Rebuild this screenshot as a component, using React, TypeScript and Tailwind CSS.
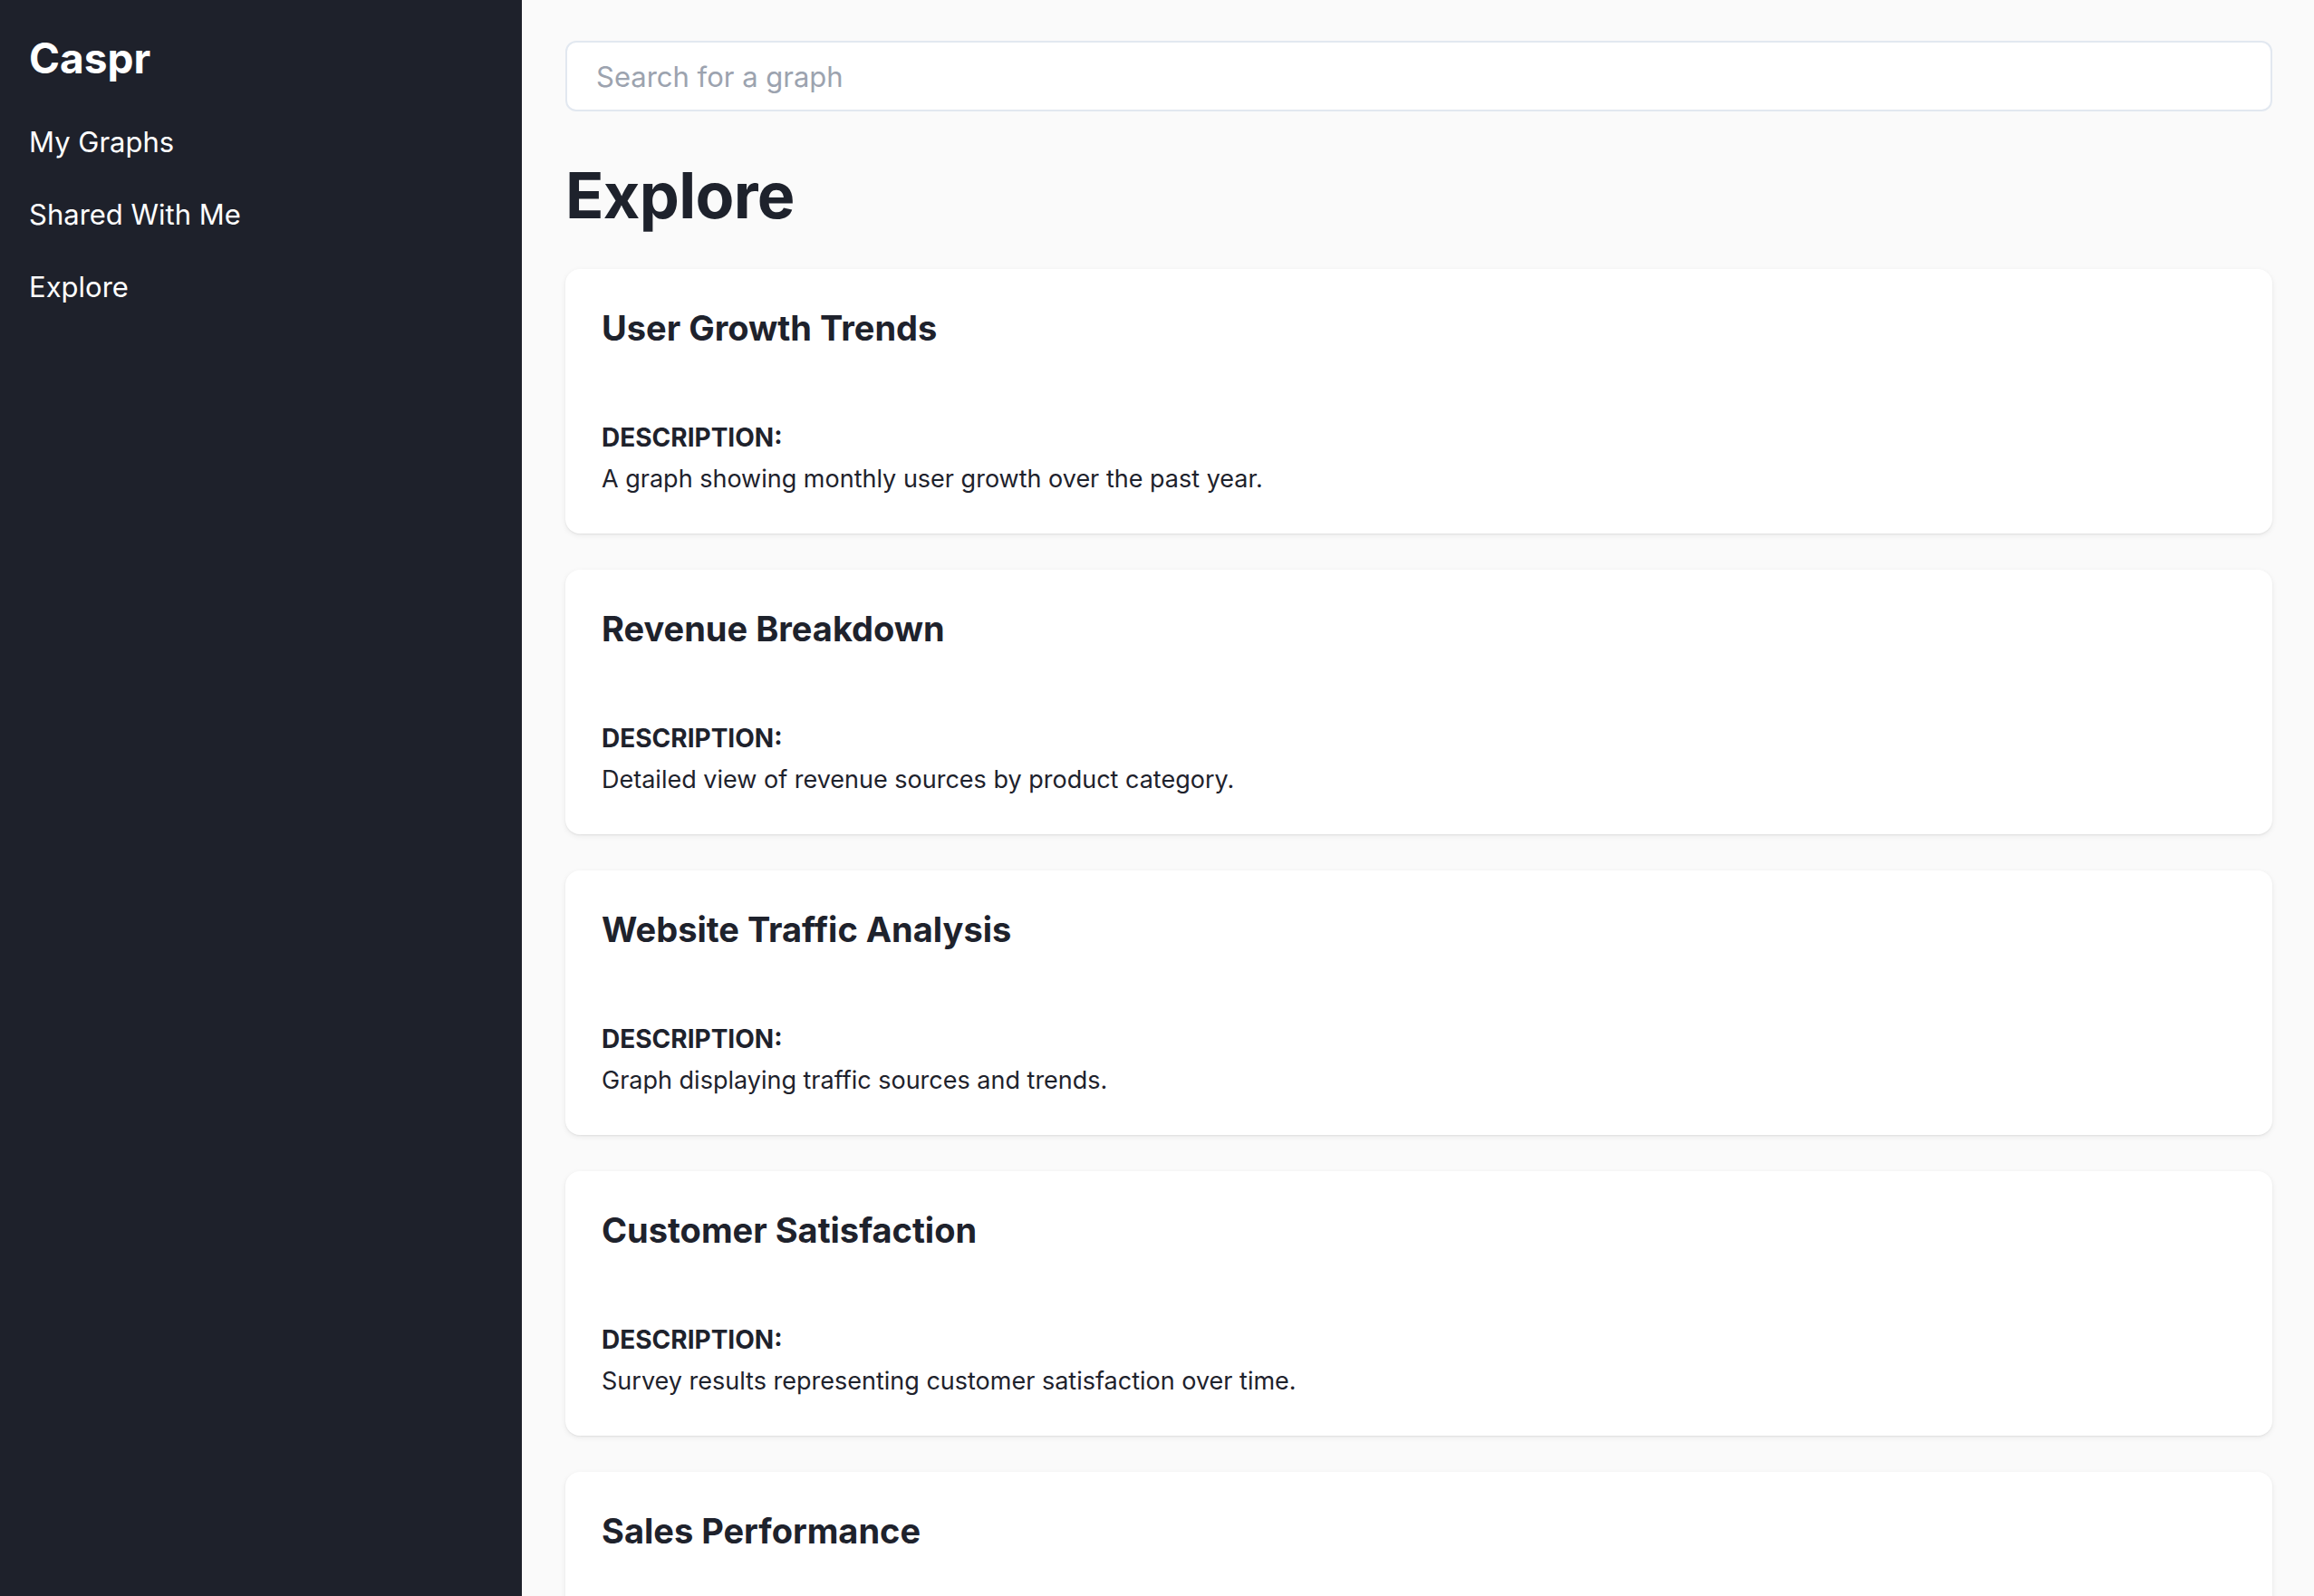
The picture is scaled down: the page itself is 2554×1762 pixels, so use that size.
import { useState } from "react"

const graphs = [
  {
    id: 1,
    title: "User Growth Trends",
    description: "A graph showing monthly user growth over the past year.",
  },
  {
    id: 2,
    title: "Revenue Breakdown",
    description: "Detailed view of revenue sources by product category.",
  },
  {
    id: 3,
    title: "Website Traffic Analysis",
    description: "Graph displaying traffic sources and trends.",
  },
  {
    id: 4,
    title: "Customer Satisfaction",
    description: "Survey results representing customer satisfaction over time.",
  },
  {
    id: 5,
    title: "Sales Performance",
    description: "Quarterly sales figures compared across regions.",
  },
]

const navItems = ["My Graphs", "Shared With Me", "Explore"]

function Sidebar() {
  return (
    <aside className="w-[576px] shrink-0 h-full bg-[#1e212b] text-white px-8 pt-8">
      <h1 className="text-[46px] leading-[64px] font-bold">Caspr</h1>
      <nav className="mt-[21px] flex flex-col">
        {navItems.map((item) => (
          <a key={item} href="#" className="py-4 text-[31px] leading-[48px] text-white">
            {item}
          </a>
        ))}
      </nav>
    </aside>
  )
}

function GraphCard({ title, description }: { title: string; description: string }) {
  return (
    <div className="bg-white rounded-2xl p-10 shadow-[0_1px_2px_rgba(0,0,0,0.06),0_2px_6px_rgba(0,0,0,0.07)]">
      <h2 className="text-[38px] leading-[50px] font-bold text-[#1e222c]">{title}</h2>
      <div className="mt-[76px]">
        <p className="text-[28px] leading-[40px] font-bold text-[#1e222c] uppercase">Description:</p>
        <p className="mt-[6px] text-[27px] leading-[40px] text-[#1e222c]">{description}</p>
      </div>
    </div>
  )
}

export default function App() {
  const [query, setQuery] = useState("")

  const filtered = graphs.filter((g) => g.title.toLowerCase().includes(query.toLowerCase()))

  return (
    <div className="flex h-screen overflow-hidden font-['Inter',sans-serif]">
      <Sidebar />

      {/* Main Content */}
      <main className="flex-1 h-full overflow-hidden bg-[#fafafa] pl-12 pr-[46px] pt-[45px]">
        <input
          type="text"
          value={query}
          onChange={(e) => setQuery(e.target.value)}
          placeholder="Search for a graph"
          className="w-full h-[78px] rounded-xl border-2 border-[#e2e8f0] bg-white px-8 text-[31px] text-[#1e222c] placeholder:text-[#9ca3af] outline-none"
        />

        <h1 className="mt-[53px] mb-[41px] text-[70px] leading-[80px] font-bold text-[#1e222c] tracking-[-0.01em]">
          Explore
        </h1>

        <div className="flex flex-col gap-10">
          {filtered.map((g) => (
            <GraphCard key={g.id} title={g.title} description={g.description} />
          ))}
        </div>
      </main>
    </div>
  )
}
